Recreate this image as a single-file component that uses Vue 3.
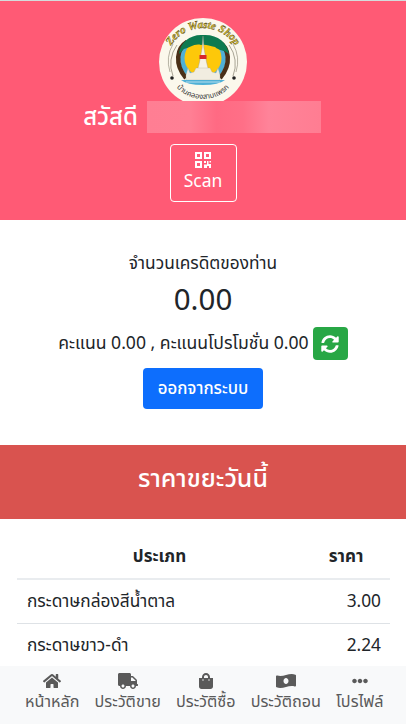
<template>
  <div class="page">
    <div class="content">
      <header class="hero">
        <svg class="logo" viewBox="0 0 88 88" width="88" height="88">
          <defs>
            <path id="arcTop" d="M6 48 A38 38 0 0 1 82 48" />
            <path id="arcBottom" d="M14 64.900 A36 36 0 0 0 74 64.900" />
          </defs>
          <circle cx="44" cy="44" r="44" fill="#fbf8ec" />
          <path d="M14 58 A32 32 0 0 1 18 27 M74 58 A32 32 0 0 0 70 27" fill="none" stroke="#6e6a58" stroke-width="0.6" />
          <path d="M11 54 A35 35 0 0 1 14 26 M77 54 A35 35 0 0 0 74 26" fill="none" stroke="#6e6a58" stroke-width="0.5" />
          <circle cx="44" cy="41" r="23" fill="#4fb0d6" />
          <circle cx="44" cy="40" r="18.500" fill="#fdc80a" />
          <path d="M27 60 C15 46 18 30 28 24 M61 60 C73 46 70 30 60 24" fill="none" stroke="#4a3018" stroke-width="4.500" />
          <path d="M20 36 C21 24 32 16 44 17 C58 16 68 24 70 36 C64 31 60 33 56 29 C50 28 47 26 42 27 C36 25 30 30 25 31 Z" fill="#0e7a50" />
          <path d="M44 18 L44.900 30 L46.200 37 L47.500 44 L49 50 L52 62 L36 62 L39 50 L40.500 44 L41.800 37 L43.100 30 Z" fill="#f6f2e6" stroke="#9c9686" stroke-width="0.4" />
          <rect x="40.500" y="37" width="7" height="4" fill="#d7262c" />
          <path d="M27 62 V57 L29 50 L31 55 L35 54 L37 50 H51 L53 54 L57 55 L59 50 L61 57 V62 Z" fill="#f1ede0" stroke="#a8a292" stroke-width="0.3" />
          <path d="M22 62 H66 Q60 67 44 67 Q28 67 22 62 Z" fill="#4fb0d6" />
          <path d="M27 64 H61" stroke="#fff" stroke-width="0.6" />
          <circle cx="13" cy="60" r="1.800" fill="#222" />
          <circle cx="75" cy="60" r="1.800" fill="#222" />
          <text class="logo-top"><textPath href="#arcTop" startOffset="50%" text-anchor="middle">Zero Waste Shop</textPath></text>
          <text class="logo-bottom"><textPath href="#arcBottom" startOffset="50%" text-anchor="middle">บ้านคลองสามแพรก</textPath></text>
        </svg>
        <div class="greeting">
          <span>สวัสดี</span>
          <span class="blurred"></span>
        </div>
        <button class="scan">
          <svg viewBox="0 0 16 16" width="16" height="16" fill="#fff">
            <path d="M0 0h7v7H0zM2 2v3h3V2zM9 0h7v7H9zM11 2v3h3V2zM0 9h7v7H0zM2 11v3h3v-3z" fill-rule="evenodd" />
            <path d="M9 9h2v2H9zM12 9h1.500v3H16v4h-2v-2h-2v2h-3v-3.500h3zM14.500 9H16v1.500h-1.500z" />
          </svg>
          <span>Scan</span>
        </button>
      </header>

      <section class="credit">
        <p class="credit-label">จำนวนเครดิตของท่าน</p>
        <p class="credit-value">0.00</p>
        <div class="points">
          <span>คะแนน 0.00 , คะแนนโปรโมชั่น 0.00</span>
          <button class="refresh">
            <svg viewBox="0 0 512 512" width="18" height="18" fill="#fff">
              <path d="M370.700 133.300C339.500 104 298.900 88 255.800 88c-77.500.1-144.300 53.200-162.800 126.900-1.300 5.400-6.100 9.100-11.700 9.100H24.100c-7.500 0-13.200-6.800-11.800-14.200C33.900 94.900 134.800 8 256 8c66.400 0 126.800 26.100 171.300 68.700L463 41c15.100-15.100 41-4.400 41 17v134c0 13.300-10.700 24-24 24H346c-21.400 0-32.100-25.900-17-41zM32 296h134c21.400 0 32.100 25.900 17 41l-41.700 41.700c31.200 29.300 71.800 45.300 114.900 45.300 77.400-.1 144.300-53.100 162.800-126.800 1.300-5.400 6.100-9.100 11.700-9.100h57.300c7.500 0 13.200 6.800 11.800 14.200C478.100 417.100 377.200 504 256 504c-66.400 0-126.800-26.100-171.300-68.700L49 471c-15.100 15.100-41 4.400-41-17V320c0-13.300 10.700-24 24-24z" />
            </svg>
          </button>
        </div>
        <button class="logout">ออกจากระบบ</button>
      </section>

      <h2 class="price-title">ราคาขยะวันนี้</h2>

      <div class="table-wrap">
        <table class="prices">
          <thead>
            <tr>
              <th>ประเภท</th>
              <th class="price-head">ราคา</th>
            </tr>
          </thead>
          <tbody>
            <tr v-for="row in prices" :key="row.name">
              <td>{{ row.name }}</td>
              <td class="num">{{ row.price }}</td>
            </tr>
          </tbody>
        </table>
      </div>
    </div>

    <nav class="tabs">
      <a v-for="tab in tabs" :key="tab.label" class="tab">
        <svg :viewBox="tab.box" height="16" :width="tab.w" fill="#5a5a5a"><path :d="tab.d" /></svg>
        <span>{{ tab.label }}</span>
      </a>
    </nav>
  </div>
</template>

<script setup>
const prices = [
  { name: 'กระดาษกล่องสีน้ำตาล', price: '3.00' },
  { name: 'กระดาษขาว-ดำ', price: '2.24' },
]

const tabs = [
  {
    label: 'หน้าหลัก',
    box: '0 0 576 512',
    w: 18,
    d: 'M280.400 148.300L96 300.100V464a16 16 0 0 0 16 16l112.100-.3a16 16 0 0 0 15.900-16V368a16 16 0 0 1 16-16h64a16 16 0 0 1 16 16v95.600a16 16 0 0 0 16 16.100L464 480a16 16 0 0 0 16-16V300L295.700 148.300a12.200 12.200 0 0 0-15.300 0zM571.600 251.500L488 182.600V44.100a12 12 0 0 0-12-12h-56a12 12 0 0 0-12 12v72.600L318.500 43a48 48 0 0 0-61 0L4.300 251.500a12 12 0 0 0-1.600 16.900l25.500 31A12 12 0 0 0 45.200 301l235.200-193.700a12.200 12.200 0 0 1 15.300 0L530.900 301a12 12 0 0 0 16.900-1.600l25.500-31a12 12 0 0 0-1.700-16.900z',
  },
  {
    label: 'ประวัติขาย',
    box: '0 0 640 512',
    w: 20,
    d: 'M624 352h-16V243.900c0-12.700-5.100-24.900-14.100-33.900L494 110.100c-9-9-21.200-14.100-33.900-14.100H416V48c0-26.500-21.500-48-48-48H48C21.500 0 0 21.500 0 48v320c0 26.500 21.500 48 48 48h16c0 53 43 96 96 96s96-43 96-96h128c0 53 43 96 96 96s96-43 96-96h48c8.800 0 16-7.200 16-16v-32c0-8.800-7.200-16-16-16zM160 464c-26.500 0-48-21.500-48-48s21.500-48 48-48 48 21.500 48 48-21.500 48-48 48zm320 0c-26.500 0-48-21.500-48-48s21.500-48 48-48 48 21.500 48 48-21.500 48-48 48zm80-208H416V144h44.100l99.900 99.900V256z',
  },
  {
    label: 'ประวัติซื้อ',
    box: '0 0 448 512',
    w: 14,
    d: 'M352 160v-32C352 57.420 294.579 0 224 0 153.420 0 96 57.420 96 128v32H0v272c0 44.183 35.817 80 80 80h288c44.183 0 80-35.817 80-80V160h-96zm-192-32c0-35.290 28.710-64 64-64s64 28.710 64 64v32H160v-32zm160 120c-13.255 0-24-10.745-24-24s10.745-24 24-24 24 10.745 24 24-10.745 24-24 24zm-192 0c-13.255 0-24-10.745-24-24s10.745-24 24-24 24 10.745 24 24-10.745 24-24 24z',
  },
  {
    label: 'ประวัติถอน',
    box: '0 0 640 512',
    w: 20,
    d: 'M621.200 54.500C582.400 38.200 543.600 32 504.900 32 381.800 32 258.700 94.300 135.600 94.300c-30.900 0-61.700-3.900-92.600-13.700C39.500 79.500 36 79 32.600 79 15.400 79 0 92.300 0 110.800v317.300c0 12.600 7.200 24.600 18.800 29.500C57.600 473.800 96.400 480 135.100 480c123.100 0 246.200-62.300 369.300-62.300 30.900 0 61.700 3.900 92.600 13.700 3.500 1.100 7 1.600 10.400 1.600 17.200 0 32.600-13.300 32.600-31.800V83.900c0-12.600-7.200-24.500-18.800-29.400zM320 352c-44.200 0-80-43-80-96s35.800-96 80-96 80 43 80 96-35.800 96-80 96z',
  },
  {
    label: 'โปรไฟล์',
    box: '0 0 512 512',
    w: 16,
    d: 'M328 256c0 39.800-32.200 72-72 72s-72-32.200-72-72 32.200-72 72-72 72 32.200 72 72zm104-72c-39.800 0-72 32.200-72 72s32.200 72 72 72 72-32.200 72-72-32.200-72-72-72zm-352 0c-39.800 0-72 32.200-72 72s32.200 72 72 72 72-32.200 72-72-32.200-72-72-72z',
  },
]
</script>

<style>
html, body { margin: 0; overflow: hidden; }
</style>

<style scoped>
.page {
  height: 724px;
  display: flex;
  flex-direction: column;
  overflow: hidden;
  background: #fff;
  color: #212529;
  font-family: "Noto Sans", "Noto Sans Thai", "Open Sans", sans-serif;
  font-size: 17.300px;
}
.content { flex: 1; min-height: 0; overflow: hidden; }

.hero {
  height: 220px;
  box-sizing: border-box;
  background: #ff5a75;
  border-top: 1px solid #d4dcdc;
  padding-top: 17px;
  display: flex;
  flex-direction: column;
  align-items: center;
  color: #fff;
}
.logo { flex: none; }
.logo-top { font: italic 700 11px "Liberation Serif", serif; fill: #e2c936; stroke: #3f3410; stroke-width: 0.35px; }
.logo-bottom { font-size: 7.500px; fill: #333; }
.greeting {
  height: 32px;
  margin-top: -5px;
  display: flex;
  align-items: center;
  gap: 9px;
  font-size: 24px;
  font-weight: 500;
  transform: translateX(-1px);
}
.blurred {
  width: 174px;
  height: 32px;
  background: linear-gradient(90deg, #ff7e93 0%, #ff7f94 25%, #ff6a83 40%, #ff6f87 55%, #ff8399 70%, #ff7d92 100%);
}
.scan {
  width: 67px;
  height: 58px;
  margin-top: 11px;
  padding: 0 0 2px;
  box-sizing: border-box;
  display: flex;
  flex-direction: column;
  align-items: center;
  justify-content: center;
  background: transparent;
  border: 1px solid #fff;
  border-radius: 4px;
  color: #fff;
  font: inherit;
  font-size: 17.500px;
  line-height: 24px;
}

.credit {
  height: 225px;
  box-sizing: border-box;
  padding-top: 31px;
  display: flex;
  flex-direction: column;
  align-items: center;
}
.credit-label { margin: 0; line-height: 24px; }
.credit-value { margin: 5px 0 0; font-size: 29.500px; font-weight: 400; line-height: 38px; }
.points {
  margin-top: 9px;
  display: flex;
  align-items: center;
  gap: 4px;
  font-size: 17.600px;
}
.refresh {
  width: 35px;
  height: 33px;
  padding: 0;
  display: flex;
  align-items: center;
  justify-content: center;
  background: #28a745;
  border: 0;
  border-radius: 4px;
}
.logout {
  width: 120px;
  height: 41px;
  margin-top: 8px;
  padding: 0;
  background: #0d6efd;
  border: 0;
  border-radius: 4px;
  color: #fff;
  font: inherit;
  font-size: 16.800px;
  font-weight: 500;
}

.price-title {
  margin: 0;
  height: 74px;
  box-sizing: border-box;
  padding-top: 14px;
  background: #d9534f;
  color: #fff;
  font-size: 25px;
  font-weight: 500;
  line-height: 36px;
  text-align: center;
}

.table-wrap { padding: 16px 16px 0 17px; }
.prices { width: 100%; border-collapse: collapse; }
.prices th, .prices td {
  padding: 8px 9px 9px 10px;
  line-height: 26px;
  border-bottom: 1px solid #dee2e6;
}
.prices thead th { border-bottom: 2px solid #e9ecef; font-size: 17px; font-weight: 700; text-align: center; }
.price-head { width: 70px; }
.num { text-align: right; }

.tabs {
  flex: none;
  height: 58px;
  box-sizing: border-box;
  padding: 7px 0 0 25px;
  background: #f8f9fa;
  display: flex;
  gap: 15px;
}
.tab {
  display: flex;
  flex-direction: column;
  align-items: center;
  color: #5a5a5a;
  font-size: 16.200px;
  line-height: 21px;
  white-space: nowrap;
}
.tab svg { margin-bottom: 2px; }
</style>
